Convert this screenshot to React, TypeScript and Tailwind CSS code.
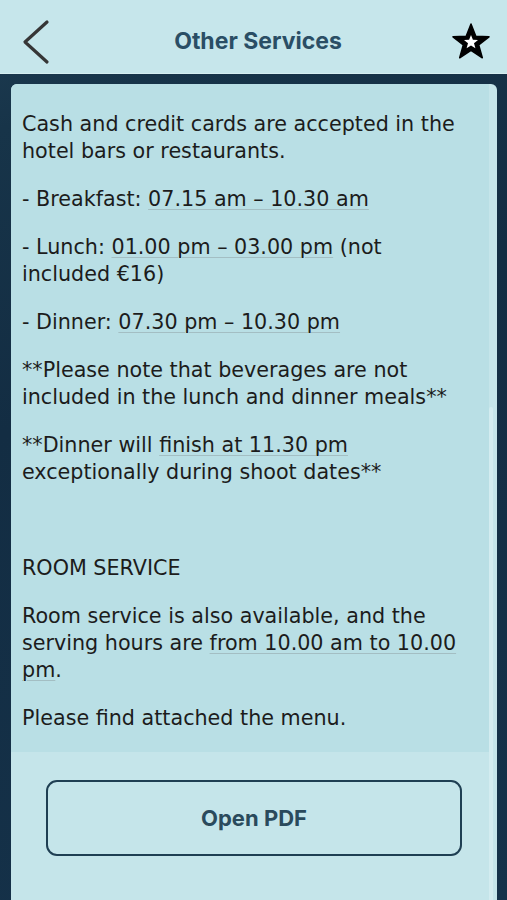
import React from "react";

const link = "underline decoration-[#a3bec3] decoration-1 underline-offset-[3px]";

export default function App() {
  return (
    <div className="w-[507px] h-[900px] overflow-hidden flex flex-col bg-[linear-gradient(160deg,#1e3c52_0%,#173449_12%,#132d43_40%,#15324a_100%)] font-['DejaVu_Sans',sans-serif]">
      {/* top bar */}
      <div className="h-[74px] shrink-0 bg-[#c6e6eb] border-b border-[#d6eef1] flex items-center justify-between pt-[10px] pl-[21px] pr-[16px]">
        <svg width="30" height="46" viewBox="0 0 30 46">
          <path d="M26 3 L4 23 L26 43" fill="none" stroke="#363636" strokeWidth="3.2" strokeLinecap="round" strokeLinejoin="round" />
        </svg>
        <h1 className="font-['Inter',sans-serif] font-bold text-[23px] text-[#2a4e65] ml-[14px]">
          Other Services
        </h1>
        <svg width="40" height="40" viewBox="0 0 40 40">
          <polygon
            points="20,2 24.8,14.3 38,14.8 27.7,23 31.3,35.8 20,28.4 8.7,35.8 12.3,23 2,14.8 15.2,14.3"
            fill="#000"
            stroke="#000"
            strokeWidth="1.5"
            strokeLinejoin="round"
          />
          <polygon
            points="20,13 21.9,17.8 27,18 23,21.3 24.4,26.3 20,23.4 15.6,26.3 17,21.3 13,18 18.1,17.8"
            fill="#fff"
          />
        </svg>
      </div>

      {/* card */}
      <div className="relative mt-[10px] ml-[11px] w-[486px] flex-1 rounded-t-[6px] bg-[#c5e5ea] overflow-hidden">
        <div className="w-[478px] bg-[#b9dfe5] pt-[27px] pb-[20px] pl-[11px] text-[20.7px] leading-[27px] text-[#1c1c1c]">
          <div className="w-[450px] flex flex-col gap-[21px]">
            <p>Cash and credit cards are accepted in the hotel bars or restaurants.</p>
            <p>
              - Breakfast: <span className={link}>07.15 am – 10.30 am</span>
            </p>
            <p>
              - Lunch: <span className={link}>01.00 pm – 03.00 pm</span> (not included €16)
            </p>
            <p>
              - Dinner: <span className={link}>07.30 pm – 10.30 pm</span>
            </p>
            <p>**Please note that beverages are not included in the lunch and dinner meals**</p>
            <p>
              **Dinner will <span className={link}>finish at 11.30 pm</span> exceptionally during shoot dates**
            </p>
            <p>&nbsp;</p>
            <p>ROOM SERVICE</p>
            <p>
              Room service is also available, and the serving hours are{" "}
              <span className={link}>from 10.00 am to 10.00 pm</span>.
            </p>
            <p>Please find attached the menu.</p>
          </div>
        </div>

        <div className="pt-[28px] pl-[35px]">
          <button className="w-[416px] h-[76px] rounded-[11px] border-2 border-[#1f3f53] flex items-center justify-center font-['Inter',sans-serif] font-bold text-[22px] text-[#2a4a5c]">
            Open PDF
          </button>
        </div>

        {/* scroll indicator */}
        <div className="absolute left-[478px] top-[323px] w-[4px] h-[600px] rounded-full bg-[#d3ecf0]" />
      </div>
    </div>
  );
}
